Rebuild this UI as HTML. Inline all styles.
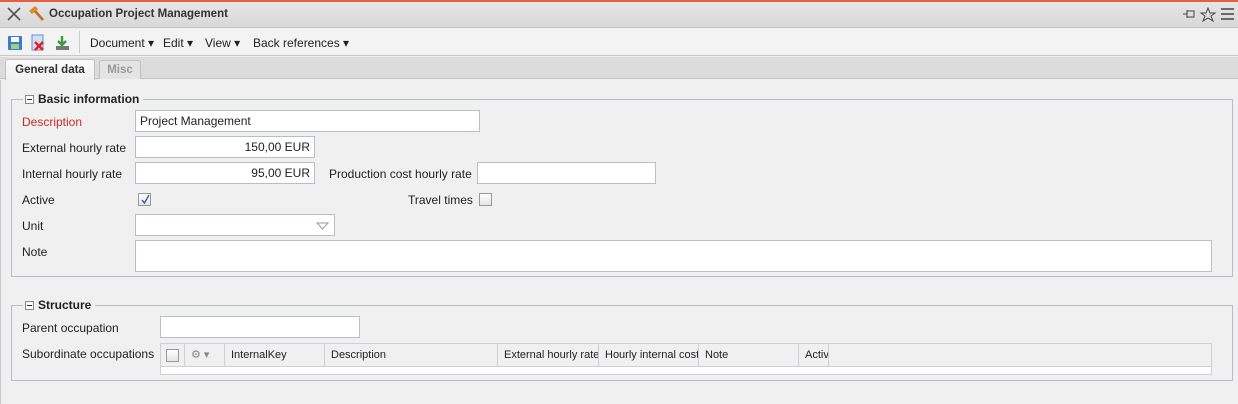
<!DOCTYPE html>
<html><head><style>
*{box-sizing:border-box;margin:0;padding:0}
body{width:1238px;height:404px;overflow:hidden;background:#f0f0f0;font-family:"Liberation Sans",Arial,sans-serif;font-size:12px;color:#222;position:relative}
.a{position:absolute}
.inp{position:absolute;background:#fff;border:1px solid #b8bccb;height:22px;line-height:20px;padding:0 4px;font-size:12px}
.lbl{position:absolute;font-size:12px;line-height:14px}
.fs{position:absolute;border:1px solid #b9bcc9}
.leg{position:absolute;background:#f0f0f0;font-weight:bold;padding:0 4px 0 2px;display:flex;align-items:center;gap:4px;font-size:12px}
.mb{width:9px;height:9px;border:1px solid #888;position:relative;background:#fff}
.mb:after{content:"";position:absolute;left:1px;top:3px;width:5px;height:1px;background:#333}
.cb{position:absolute;width:13px;height:13px;border:1px solid #999;background:linear-gradient(#fff,#e4e4e4)}
.th{position:absolute;top:0;height:23px;line-height:23px;border-right:1px solid #cfcfd6;padding-left:6px;font-size:11px;white-space:nowrap;overflow:hidden}
</style></head><body>
<div class="a" style="left:0;top:0;width:1238px;height:2px;background:#e8603e"></div>
<div class="a" style="left:0;top:2px;width:1238px;height:26px;background:linear-gradient(#e6e6e6,#d8d8d8);border-bottom:1px solid #c4c4c4"></div>
<svg class="a" style="left:7px;top:7px" width="14" height="14"><path d="M1 1L13 13M13 1L1 13" stroke="#555" stroke-width="1.6"/></svg>
<svg class="a" style="left:27px;top:5px" width="18" height="18"><path d="M2 6L8 1L11 4L5 9Z" fill="#d98a2b"/><path d="M8 6L16 15" stroke="#c07020" stroke-width="2.6"/></svg>
<div class="a" style="left:49px;top:8px;font-weight:bold;font-size:11.5px;color:#333">Occupation Project Management</div>
<svg class="a" style="left:1182px;top:7px" width="52" height="15"><path d="M1 7H5M5 3V11M5 4H12V10H5" fill="none" stroke="#444"/><path d="M26 1L28 6L33 6L29 9L31 14L26 11L21 14L23 9L19 6L24 6Z" fill="none" stroke="#444"/><path d="M39 2H52M39 7H52M39 12H52" stroke="#444" stroke-width="1.6"/></svg>
<div class="a" style="left:0;top:29px;width:1238px;height:27px;background:#f3f3f3;border-bottom:1px solid #c8c8c8"></div>
<svg class="a" style="left:7px;top:34px" width="70" height="18"><rect x="1" y="2" width="14" height="14" fill="#3a7bd5" rx="1"/><rect x="4" y="3" width="8" height="5" fill="#fff"/><rect x="4" y="10" width="8" height="5" fill="#9fd07a"/><rect x="25" y="1" width="11" height="15" fill="#cfe0f5" stroke="#6b8fc0"/><path d="M28 8L36 16M36 8L28 16" stroke="#e02020" stroke-width="2.4"/><path d="M55 2V9M51 7L55 11L59 7" stroke="#3a9a3a" stroke-width="2.4" fill="none"/><rect x="49" y="12" width="13" height="4" fill="#777"/></svg>
<div class="a" style="left:79px;top:31px;width:1px;height:22px;background:#ccc"></div>
<div class="a" style="left:90px;top:36px;font-size:12px">Document ▾</div>
<div class="a" style="left:163px;top:36px;font-size:12px">Edit ▾</div>
<div class="a" style="left:205px;top:36px;font-size:12px">View ▾</div>
<div class="a" style="left:253px;top:36px;font-size:12px">Back references ▾</div>
<div class="a" style="left:0;top:57px;width:1238px;height:22px;background:#dcdcdc;border-bottom:1px solid #c4c4c4"></div>
<div class="a" style="left:5px;top:59px;width:90px;height:21px;background:linear-gradient(#fafafa,#f0f0f0);border:1px solid #c0c0c0;border-bottom:none;border-radius:3px 3px 0 0;font-weight:bold;font-size:11.5px;text-align:center;line-height:20px;color:#333">General data</div>
<div class="a" style="left:99px;top:60px;width:42px;height:19px;background:#e4e4e4;border:1px solid #c0c0c0;border-bottom:none;border-radius:3px 3px 0 0;font-weight:bold;font-size:11.5px;text-align:center;line-height:18px;color:#999">Misc</div>
<div class="a" style="left:0;top:80px;width:1px;height:324px;background:#c8c8c8"></div>

<div class="fs" style="left:11px;top:99px;width:1222px;height:178px"></div>
<div class="leg" style="left:23px;top:92px"><div class="mb"></div>Basic information</div>
<div class="lbl" style="left:22px;top:115px;color:#d02828">Description</div>
<div class="inp" style="left:135px;top:110px;width:345px">Project Management</div>
<div class="lbl" style="left:22px;top:141px">External hourly rate</div>
<div class="inp" style="left:135px;top:136px;width:180px;text-align:right">150,00 EUR</div>
<div class="lbl" style="left:22px;top:167px">Internal hourly rate</div>
<div class="inp" style="left:135px;top:162px;width:180px;text-align:right">95,00 EUR</div>
<div class="lbl" style="left:329px;top:167px">Production cost hourly rate</div>
<div class="inp" style="left:477px;top:162px;width:179px"></div>
<div class="lbl" style="left:22px;top:193px">Active</div>
<div class="cb" style="left:138px;top:193px"></div>
<svg class="a" style="left:140px;top:194px" width="11" height="11"><path d="M2 6L4.5 9L9 1" stroke="#3b5fa8" stroke-width="1.4" fill="none"/></svg>
<div class="lbl" style="left:408px;top:193px">Travel times</div>
<div class="cb" style="left:479px;top:193px"></div>
<div class="lbl" style="left:22px;top:219px">Unit</div>
<div class="inp" style="left:135px;top:214px;width:200px"></div>
<svg class="a" style="left:316px;top:222px" width="13" height="8"><path d="M1 1H12L6.5 7Z" fill="#fff" stroke="#999"/></svg>
<div class="lbl" style="left:22px;top:245px">Note</div>
<div class="inp" style="left:135px;top:240px;width:1077px;height:32px"></div>

<div class="fs" style="left:11px;top:305px;width:1222px;height:76px"></div>
<div class="leg" style="left:23px;top:298px"><div class="mb"></div>Structure</div>
<div class="lbl" style="left:22px;top:321px">Parent occupation</div>
<div class="inp" style="left:160px;top:316px;width:200px"></div>
<div class="lbl" style="left:22px;top:347px">Subordinate occupations</div>
<div class="a" style="left:160px;top:343px;width:1052px;height:32px;border:1px solid #cfcfd6;background:#fff">
 <div class="a" style="left:0;top:0;width:1050px;height:23px;background:#f0f0f0;border-bottom:1px solid #cfcfd6"></div>
 <div class="th" style="left:0;width:24px"></div>
 <div class="cb" style="left:5px;top:5px"></div>
 <div class="th" style="left:24px;width:40px;color:#888">⚙ ▾</div>
 <div class="th" style="left:64px;width:100px">InternalKey</div>
 <div class="th" style="left:164px;width:173px">Description</div>
 <div class="th" style="left:337px;width:101px">External hourly rate</div>
 <div class="th" style="left:438px;width:100px">Hourly internal cost</div>
 <div class="th" style="left:538px;width:100px">Note</div>
 <div class="th" style="left:638px;width:30px">Activ</div>
 <div class="a" style="left:0;top:30px;width:1050px;height:1px;background:#cfcfd6"></div>
</div>
</body></html>
